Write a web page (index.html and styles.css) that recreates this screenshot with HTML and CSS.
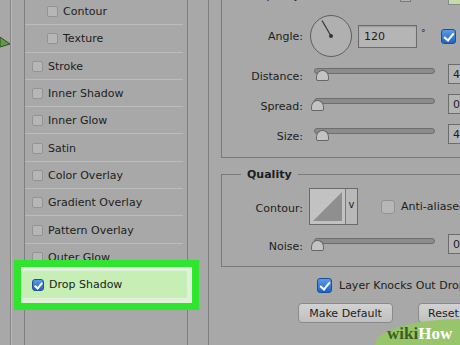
FILE: index.html
```html
<!DOCTYPE html>
<html lang="en">
<head>
    <meta charset="UTF-8">
    <meta name="viewport" content="width=device-width, initial-scale=1.0">
    <title>Layer Style - Drop Shadow</title>
    <link rel="stylesheet" href="styles.css">
</head>
<body>
    <div class="stage">
        <div class="edge">
            <svg class="edge-arrow" width="10" height="12" viewBox="0 0 10 12">
                <polygon points="0,0 10,7 0,10" fill="#5f9a46" stroke="#2f4f25" stroke-width="1"/>
            </svg>
        </div>
        <div class="rail"></div>

        <ul class="style-list">
            <li class="style-row sub"><span class="check"></span>Contour</li>
            <li class="style-row sub"><span class="check"></span>Texture</li>
            <li class="style-row"><span class="check"></span>Stroke</li>
            <li class="style-row"><span class="check"></span>Inner Shadow</li>
            <li class="style-row"><span class="check"></span>Inner Glow</li>
            <li class="style-row"><span class="check"></span>Satin</li>
            <li class="style-row"><span class="check"></span>Color Overlay</li>
            <li class="style-row"><span class="check"></span>Gradient Overlay</li>
            <li class="style-row"><span class="check"></span>Pattern Overlay</li>
            <li class="style-row"><span class="check"></span>Outer Glow</li>
            <li class="style-row selected"><span class="check on"></span>Drop Shadow</li>
        </ul>

        <div class="gutter"></div>

        <div class="options">
            <div class="group effect">
                <div class="opt-row opacity">
                    <span class="opt-label">Opacity:</span>
                    <span class="stub"></span>
                    <span class="swatch"></span>
                </div>
                <div class="opt-row angle">
                    <span class="opt-label">Angle:</span>
                    <svg class="dial" width="42" height="42" viewBox="0 0 42 42">
                        <circle cx="21" cy="21" r="20.5" fill="#b0b0b0" stroke="#5e5e5e" stroke-width="1"/>
                        <line x1="21" y1="21" x2="12" y2="5.5" stroke="#3a3a3a" stroke-width="1.3"/>
                        <circle cx="21" cy="21" r="2" fill="#333"/>
                    </svg>
                    <span class="num-field">120</span>
                    <span class="degree">°</span>
                    <span class="check big on"></span>
                </div>
                <div class="opt-row slider-row first">
                    <span class="opt-label">Distance:</span>
                    <div class="slider"><div class="track"></div><span class="thumb" style="left: 2px;"></span></div>
                    <span class="num-box">4</span>
                </div>
                <div class="opt-row slider-row">
                    <span class="opt-label">Spread:</span>
                    <div class="slider"><div class="track"></div><span class="thumb" style="left: -3px;"></span></div>
                    <span class="num-box">0</span>
                </div>
                <div class="opt-row slider-row">
                    <span class="opt-label">Size:</span>
                    <div class="slider"><div class="track"></div><span class="thumb" style="left: 2px;"></span></div>
                    <span class="num-box">4</span>
                </div>
            </div>

            <fieldset class="group quality">
                <legend>Quality</legend>
                <div class="opt-row contour-row">
                    <span class="opt-label">Contour:</span>
                    <div class="contour-picker">
                        <svg class="contour-preview" width="35" height="35" viewBox="0 0 35 35">
                            <rect x="0" y="0" width="35" height="35" fill="#c2c2c2"/>
                            <polygon points="3,32 32,3 32,32" fill="#8f8f8f"/>
                        </svg>
                        <span class="contour-arrow">v</span>
                    </div>
                    <span class="check big"></span>
                    <span class="check-text">Anti-aliased</span>
                </div>
                <div class="opt-row slider-row noise">
                    <span class="opt-label">Noise:</span>
                    <div class="slider"><div class="track"></div><span class="thumb" style="left: -3px;"></span></div>
                    <span class="num-box">0</span>
                </div>
            </fieldset>

            <div class="knock-row">
                <span class="check big on"></span>
                <span class="check-text">Layer Knocks Out Drop Shadow</span>
            </div>
            <div class="button-row">
                <button class="panel-btn make">Make Default</button>
                <button class="panel-btn reset">Reset to Default</button>
            </div>
        </div>

        <div class="callout"></div>
        <div class="wiki-blob"></div>
        <div class="wiki-badge"><span class="wiki">wiki</span><span class="how">How</span></div>
    </div>
</body>
</html>
```

FILE: styles.css
```css
body {
    margin: 0;
    background: #a8a8a8;
    font-family: 'DejaVu Sans', Verdana, sans-serif;
    font-size: 11px;
    color: #1d1d1d;
}
.stage {
    position: relative;
    display: flex;
    width: 460px;
    height: 345px;
    overflow: hidden;
    background: #a8a8a8;
}
.edge {
    position: relative;
    width: 10px;
    flex-shrink: 0;
    border-right: 1px solid #868686;
}
.edge-arrow {
    position: absolute;
    left: 0;
    top: 37px;
}
.rail {
    width: 12px;
    flex-shrink: 0;
    border-left: 1px solid #bababa;
}

/* styles list */
.style-list {
    list-style: none;
    margin: 0;
    padding: 0;
    width: 162px;
    flex-shrink: 0;
    border-left: 1px solid #7f7f7f;
    border-right: 1px solid #7f7f7f;
}
.style-list li:first-child {
    margin-top: -2px;
}
.style-row {
    position: relative;
    display: flex;
    align-items: center;
    height: 27.3px;
    box-sizing: border-box;
    padding-left: 7px;
}
.style-row::after {
    content: "";
    position: absolute;
    left: 0;
    right: 4px;
    bottom: 0;
    height: 1px;
    background: #bcbcbc;
}
.style-row.sub {
    padding-left: 22px;
}
.style-row .check {
    margin-right: 5px;
}
.style-row.selected {
    z-index: 2;
    margin-left: -4px;
    padding-left: 11px;
    background: #c6eeb5;
}
.style-row.selected::after {
    display: none;
}

.check {
    display: inline-block;
    position: relative;
    width: 11px;
    height: 11px;
    box-sizing: border-box;
    flex-shrink: 0;
    background: #b6b6b6;
    border: 1px solid #939393;
    border-radius: 2px;
}
.check.on {
    width: 12px;
    height: 12px;
    background: linear-gradient(#5a9bea, #1f63c6);
    border-color: #1d4f98;
    border-radius: 3px;
}
.check.on::after {
    content: "";
    position: absolute;
    left: 3px;
    top: 1px;
    width: 3px;
    height: 6px;
    border: solid #fff;
    border-width: 0 2px 2px 0;
    transform: rotate(40deg);
}
.check.big {
    width: 14px;
    height: 14px;
    border-radius: 3px;
}
.check.big.on {
    width: 15px;
    height: 15px;
}
.check.big.on::after {
    left: 4px;
    top: 1px;
    width: 4px;
    height: 8px;
}

.gutter {
    width: 20px;
    flex-shrink: 0;
    border-right: 1px solid #7f7f7f;
}

/* options panel */
.options {
    flex: 1;
    min-width: 0;
    padding-left: 12px;
}
.group {
    width: 300px;
    box-sizing: border-box;
    border: 1px solid #7a7a7a;
}
.effect {
    margin-top: -20px;
    padding: 3px 0 8px;
}
.opt-row {
    display: flex;
    align-items: center;
}
.opt-label {
    width: 81px;
    flex-shrink: 0;
    text-align: right;
}
.opacity {
    height: 28px;
    align-items: flex-start;
}
.opacity .opt-label {
    margin-top: 5px;
    line-height: 14px;
}
.stub {
    width: 11px;
    height: 18px;
    box-sizing: border-box;
    margin-left: 97px;
    border: 1px solid #7a7a7a;
    background: #b4b4b4;
}
.swatch {
    width: 16px;
    height: 21px;
    box-sizing: border-box;
    margin-left: 37px;
    border: 1px solid #8a8a8a;
    background: #c4dcaa;
}
.angle {
    height: 44px;
    margin-top: 2px;
}
.dial {
    margin-left: 7px;
    flex-shrink: 0;
}
.num-field {
    width: 59px;
    height: 23px;
    box-sizing: border-box;
    margin-left: 6px;
    padding: 4px 0 0 5px;
    border: 1px solid #6c6c6c;
    background: #b5b5b5;
    box-shadow: inset 0 1px 1px rgba(0, 0, 0, 0.15);
    flex-shrink: 0;
}
.degree {
    width: 6px;
    margin-left: 4px;
    align-self: flex-start;
    margin-top: 14px;
    font-size: 9px;
}
.angle .check {
    margin-left: 14px;
}
.slider-row {
    height: 30px;
}
.slider-row.first {
    margin-top: 1px;
}
.slider-row .opt-label {
    padding-top: 4px;
}
.slider {
    position: relative;
    width: 121px;
    height: 13px;
    margin-left: 11px;
    flex-shrink: 0;
}
.track {
    height: 6px;
    box-sizing: border-box;
    border: 1px solid #6e6e6e;
    border-radius: 3px;
    background: #8c8c8c;
}
.thumb {
    position: absolute;
    top: 2px;
    width: 13px;
    height: 11px;
    box-sizing: border-box;
    background: #c3c3c3;
    border: 1px solid #666;
    border-radius: 6px 6px 2px 2px / 7px 7px 2px 2px;
}
.num-box {
    width: 40px;
    height: 20px;
    box-sizing: border-box;
    margin-left: 13px;
    padding: 3px 0 0 4px;
    border: 1px solid #6c6c6c;
    background: #b5b5b5;
    flex-shrink: 0;
}

.quality {
    margin: 10px 0 0;
    padding: 0 0 8px;
    min-width: 0;
}
.quality legend {
    margin-left: 19px;
    padding: 0 6px;
    font-weight: bold;
    line-height: 13px;
}
.contour-row {
    height: 41px;
    margin-top: 5px;
}
.contour-row .opt-label {
    padding-top: 3px;
}
.contour-picker {
    display: flex;
    height: 37px;
    width: 49px;
    box-sizing: border-box;
    margin-left: 6px;
    border: 1px solid #6a6a6a;
    flex-shrink: 0;
}
.contour-arrow {
    flex: 1;
    border-left: 1px solid #7a7a7a;
    background: #b9b9b9;
    font-size: 10px;
    text-align: center;
    padding-top: 10px;
}
.contour-row .check {
    margin-left: 23px;
}
.check-text {
    margin-left: 6px;
    white-space: nowrap;
}
.noise {
    height: 28px;
    margin-top: 3px;
}

.knock-row {
    display: flex;
    align-items: center;
    height: 20px;
    margin-top: 8px;
    padding-left: 96px;
}
.knock-row .check-text {
    margin-left: 7px;
}
.button-row {
    display: flex;
    margin-top: 8px;
    padding-left: 77px;
    white-space: nowrap;
}
.panel-btn {
    height: 20px;
    padding: 0;
    font-family: 'DejaVu Sans', Verdana, sans-serif;
    font-size: 11px;
    color: #1d1d1d;
    background: linear-gradient(#d2d2d2, #c0c0c0);
    border: 1px solid #8a8a8a;
    border-radius: 4px;
    flex-shrink: 0;
}
.panel-btn.make {
    width: 95px;
}
.panel-btn.reset {
    width: 110px;
    margin-left: 25px;
    text-align: left;
    padding-left: 9px;
}

/* wikiHow annotations */
.callout {
    position: absolute;
    z-index: 1;
    left: 14px;
    top: 260px;
    width: 185px;
    height: 50px;
    box-sizing: border-box;
    border: 7px solid #2fe62f;
    background: #e0f0da;
}
.wiki-blob {
    position: absolute;
    left: 375px;
    top: 319px;
    width: 100px;
    height: 30px;
    background: #98c46b;
    border-top-left-radius: 85px 26px;
}
.wiki-badge {
    position: absolute;
    left: 387px;
    top: 324px;
    font-family: 'Liberation Serif', 'DejaVu Serif', serif;
    font-weight: bold;
    font-size: 17px;
    line-height: 20px;
}
.wiki {
    color: #3d5e22;
}
.how {
    color: #ffffff;
}
```
